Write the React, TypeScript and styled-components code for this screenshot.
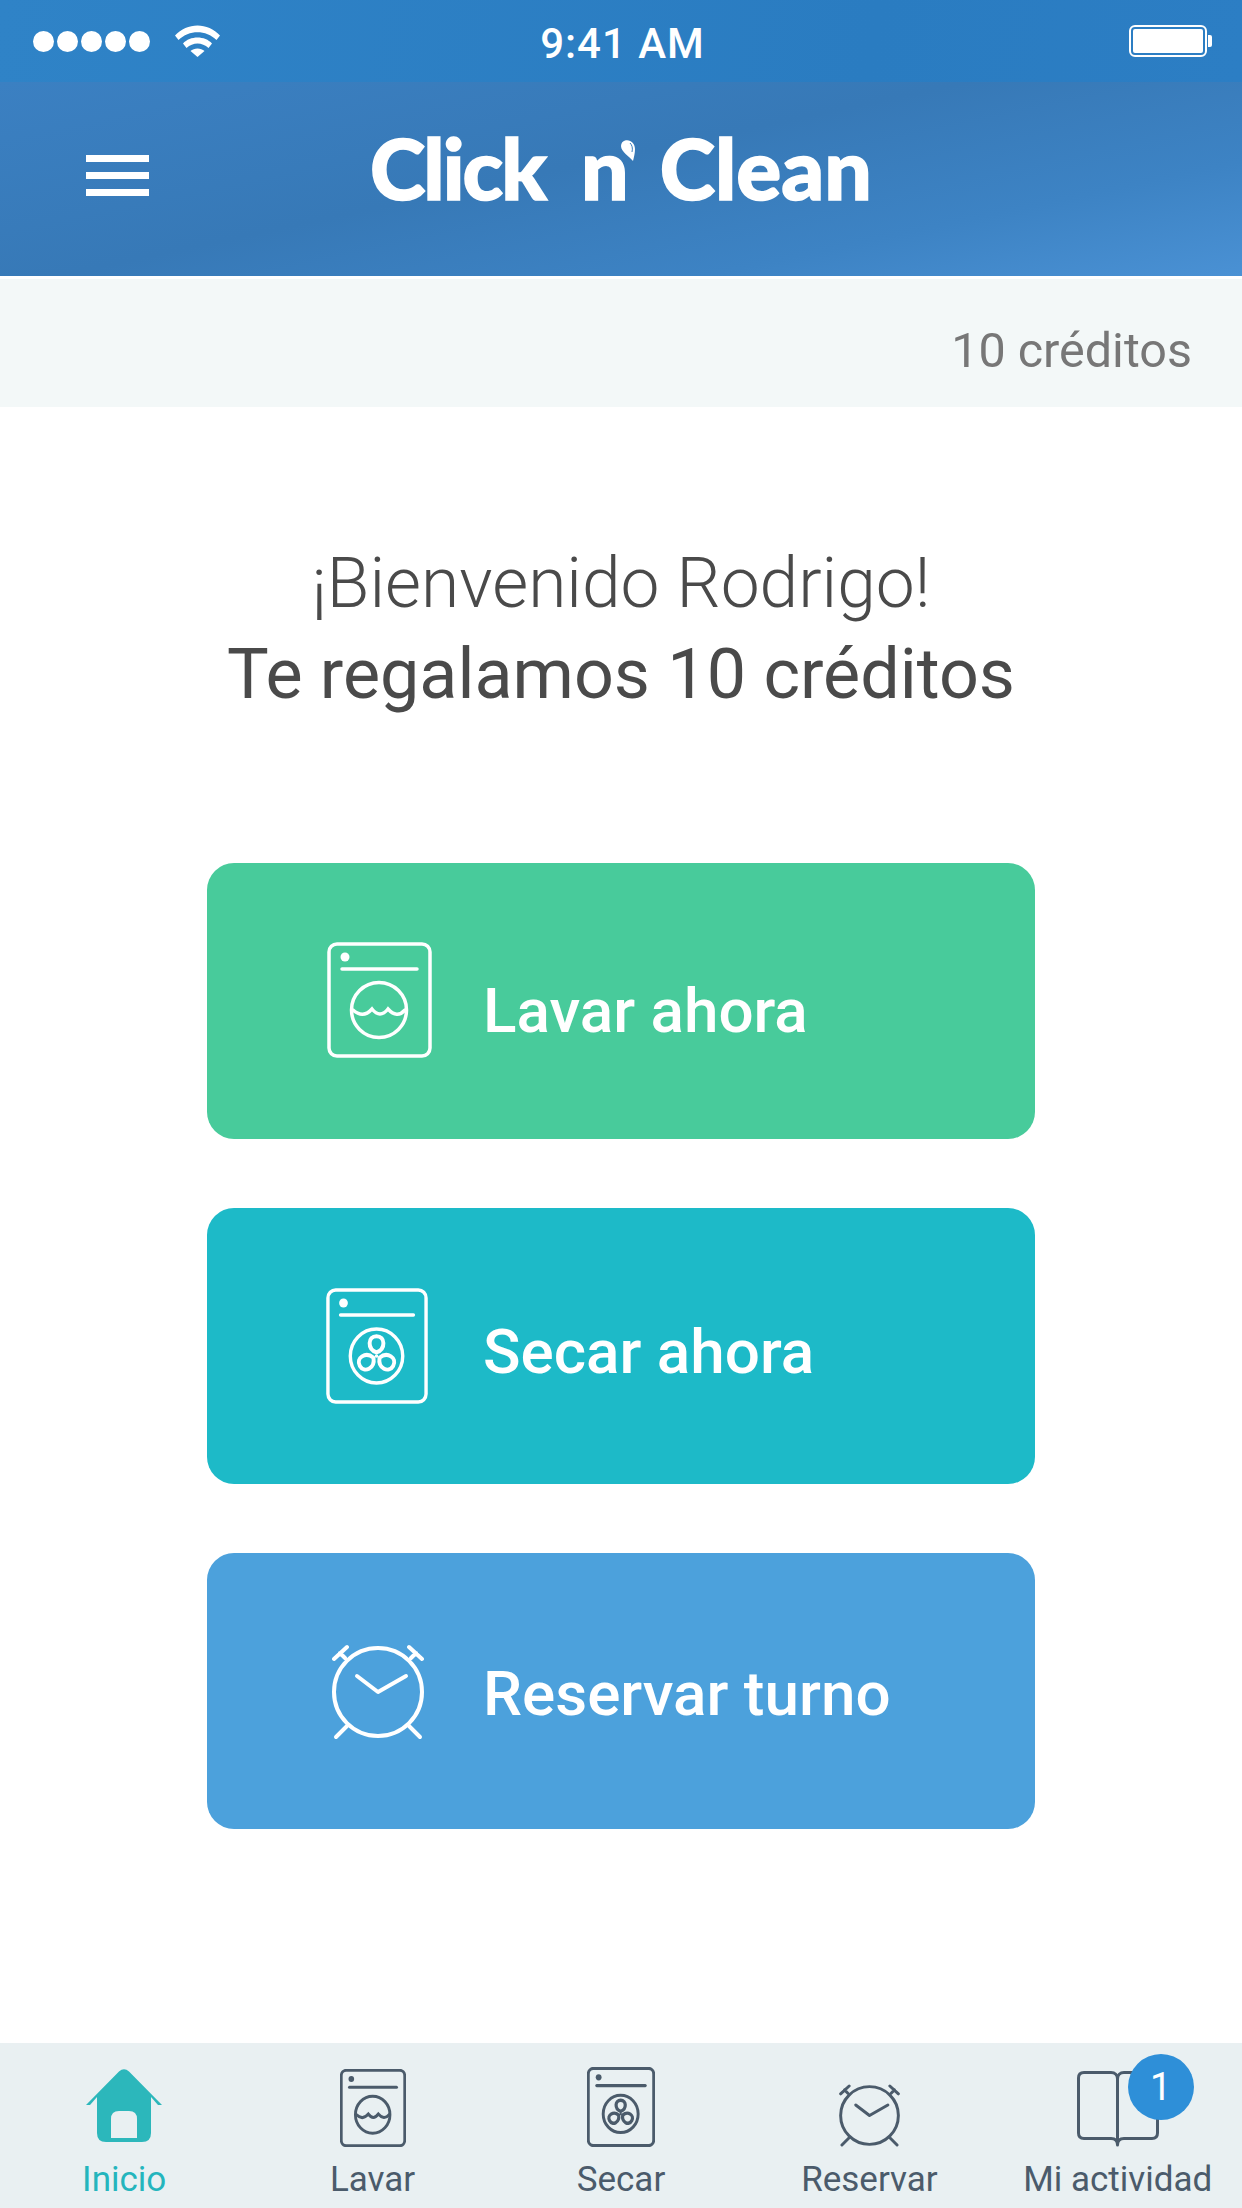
import styled, { createGlobalStyle } from "styled-components";

const GlobalStyle = createGlobalStyle`
  html, body {
    margin: 0;
    padding: 0;
    background: #fff;
    font-family: Roboto, "Liberation Sans", sans-serif;
  }
`;

type WasherProps = { drum: "water" | "fan"; strokeWidth: number; width: number; height: number };

const FAN_LOBE = "M0-4C-11-8-10-22 0-22C10-22 11-8 0-4Z";

const WasherIcon = ({ drum, strokeWidth, width, height }: WasherProps) => (
  <svg
    width={width}
    height={height}
    viewBox="0 0 105 116"
    preserveAspectRatio="none"
    fill="none"
    stroke="currentColor"
    strokeWidth={strokeWidth}
    strokeLinecap="round"
  >
    <rect x="2" y="2" width="101" height="112" rx="8" />
    <circle cx="18" cy="15" r="4.5" fill="currentColor" stroke="none" />
    <path d="M15 27H90" />
    {drum === "water" ? (
      <>
        <circle cx="52" cy="68" r="27.5" />
        <path d="M26 68Q36 77 45 67Q53 77 61 67Q70 77 78 68" />
      </>
    ) : (
      <>
        <circle cx="52" cy="68" r="27" />
        <g transform="translate(52 68) scale(.9)" strokeWidth={strokeWidth + 1}>
          <path d={FAN_LOBE} />
          <path d={FAN_LOBE} transform="rotate(120)" />
          <path d={FAN_LOBE} transform="rotate(240)" />
          <circle r="2" fill="currentColor" stroke="none" />
        </g>
      </>
    )}
  </svg>
);

const AlarmIcon = ({ strokeWidth, width, height }: { strokeWidth: number; width: number; height: number }) => (
  <svg
    width={width}
    height={height}
    viewBox="0 0 92 96"
    fill="none"
    stroke="currentColor"
    strokeWidth={strokeWidth}
    strokeLinecap="round"
    strokeLinejoin="round"
  >
    <circle cx="46" cy="48" r="44" />
    <path d="M25 32L46 48L74 32" />
    <path d="M2 15L15 3M8 9L13 14M90 15L77 3M84 9L79 14" />
    <path d="M15 82L4 93M77 82L88 93" />
  </svg>
);

// the extra height under the walls lifts the house a little above the other tab icons
const HomeIcon = () => (
  <svg width="76" height="78" viewBox="0 0 76 78">
    <path
      fill="#2cb7bb"
      d="M33 2.500Q38-2 43 2.500L76 36H72L65 28V64Q65 73 56 73H20Q11 73 11 64V28L4 36H0Z"
    />
    <path fill="#e9f0f2" d="M25 69V50Q25 42 33 42H43Q51 42 51 50V69Z" />
  </svg>
);

const BookIcon = () => (
  <svg
    width="82"
    height="76"
    viewBox="0 0 82 76"
    fill="none"
    stroke="currentColor"
    strokeWidth="3"
    strokeLinecap="round"
  >
    <path d="M40.500 74V8C40.500 4 38 1.500 34 1.500H7Q1.500 1.500 1.500 7V62Q1.500 67.500 7 67.500H34C38 67.500 40.500 69 40.500 74C40.500 69 43 67.500 47 67.500H75Q80.500 67.500 80.500 62V7Q80.500 1.500 75 1.500H47C43 1.500 40.500 4 40.500 8" />
  </svg>
);

const WifiIcon = () => (
  <svg width="45" height="32" viewBox="0 0 45 32" fill="#fff">
    <path d="M0 10.500C12-3 33-3 45 10.500L41.500 15C31 4.500 14 4.500 3.500 15Z" />
    <path d="M8 18.500C15 10.500 30 10.500 37 18.500L33.500 23C27 17 18 17 11.500 23Z" />
    <path d="M15.500 26C19 22.500 26 22.500 29.500 26L22.500 32Z" />
  </svg>
);

const Droplet = () => (
  <LogoDrop width="14" height="21" viewBox="0 0 14 21">
    <path fill="#fff" d="M4 0.500C9-1 14 3 14 9C14 13 13 17 12 21C9 17 0 12 0 6C0 3 2 1 4 0.500Z" />
    <path fill="none" stroke="#3a7dbd" strokeWidth="1" d="M9 3C11 5 12 8 11 12" />
  </LogoDrop>
);

const tabs = [
  { label: "Inicio", icon: <HomeIcon />, active: true },
  { label: "Lavar", icon: <WasherIcon drum="water" strokeWidth={4.5} width={66} height={78} /> },
  { label: "Secar", icon: <WasherIcon drum="fan" strokeWidth={4.5} width={68} height={80} /> },
  { label: "Reservar", icon: <AlarmIcon strokeWidth={4.5} width={61} height={63} /> },
  { label: "Mi actividad", icon: <BookIcon />, badge: 1 },
];

export default function App() {
  return (
    <>
      <GlobalStyle />
      <Screen>
        <StatusBar>
          <StatusLeft>
            <SignalDots>
              {[0, 1, 2, 3, 4].map((dot) => (
                <SignalDot key={dot} />
              ))}
            </SignalDots>
            <WifiIcon />
          </StatusLeft>
          <Clock>9:41 AM</Clock>
          <Battery>
            <BatteryBody>
              <BatteryLevel />
            </BatteryBody>
            <BatteryTip />
          </Battery>
        </StatusBar>

        <Header>
          <MenuButton>
            <MenuBar />
            <MenuBar />
            <MenuBar />
          </MenuButton>
          <Logo>
            <LogoWord>Click</LogoWord>
            <LogoWord>
              n
              <Droplet />
            </LogoWord>
            <LogoClean>Clean</LogoClean>
          </Logo>
        </Header>

        <CreditsBar>10 créditos</CreditsBar>

        <Main>
          <Welcome>
            <Greeting>¡Bienvenido Rodrigo!</Greeting>
            <Gift>Te regalamos 10 créditos</Gift>
          </Welcome>

          <Actions>
            <ActionButton $bg="#48cb9b">
              <ActionIcon $dx={0} $dy={-2}>
                <WasherIcon drum="water" strokeWidth={3.5} width={105} height={116} />
              </ActionIcon>
              <ActionLabel $drop={18}>Lavar ahora</ActionLabel>
            </ActionButton>
            <ActionButton $bg="#1dbac8">
              <ActionIcon $dx={-3} $dy={0}>
                <WasherIcon drum="fan" strokeWidth={3.5} width={102} height={116} />
              </ActionIcon>
              <ActionLabel $drop={11}>Secar ahora</ActionLabel>
            </ActionButton>
            <ActionButton $bg="#4ca1dc">
              <ActionIcon $dx={-2} $dy={2}>
                <AlarmIcon strokeWidth={4} width={92} height={96} />
              </ActionIcon>
              <ActionLabel $drop={4}>Reservar turno</ActionLabel>
            </ActionButton>
          </Actions>
        </Main>

        <TabBar>
          {tabs.map((tab) => (
            <Tab key={tab.label} $active={!!tab.active}>
              <TabIcon>
                {tab.icon}
                {tab.badge && <Badge>{tab.badge}</Badge>}
              </TabIcon>
              <TabLabel>{tab.label}</TabLabel>
            </Tab>
          ))}
        </TabBar>
      </Screen>
    </>
  );
}

const Screen = styled.div`
  display: flex;
  flex-direction: column;
  width: 1242px;
  height: 2208px;
  overflow: hidden;
  background: #fff;
`;

const StatusBar = styled.div`
  display: grid;
  grid-template-columns: 1fr auto 1fr;
  align-items: center;
  height: 82px;
  padding: 0 30px 0 33px;
  box-sizing: border-box;
  background: linear-gradient(100deg, #2f83c7 0%, #2a7cc1 70%, #2c7ec4 100%);
  color: #fff;
`;

const StatusLeft = styled.div`
  display: flex;
  align-items: center;
  gap: 25px;
`;

const SignalDots = styled.div`
  display: flex;
  gap: 3px;
`;

const SignalDot = styled.span`
  width: 21px;
  height: 21px;
  border-radius: 50%;
  background: #fff;
`;

const Clock = styled.div`
  padding-top: 6px;
  font-size: 42px;
  font-weight: 500;
  letter-spacing: 1px;
  line-height: 44px;
`;

const Battery = styled.div`
  display: flex;
  align-items: center;
  justify-self: end;
`;

const BatteryBody = styled.div`
  width: 78px;
  height: 32px;
  padding: 2px;
  box-sizing: border-box;
  border: 2px solid #fff;
  border-radius: 6px;
`;

const BatteryLevel = styled.div`
  height: 100%;
  background: #fff;
  border-radius: 2px;
`;

const BatteryTip = styled.div`
  width: 4px;
  height: 12px;
  margin-left: 1px;
  background: #fff;
  border-radius: 0 2px 2px 0;
`;

const Header = styled.header`
  display: grid;
  grid-template-columns: 1fr auto 1fr;
  align-items: center;
  height: 197px;
  padding: 0 86px 8px;
  box-sizing: border-box;
  background:
    linear-gradient(168deg, #3b80c2 0%, #3779b7 45%, #3d83c4 75%, #4a91d4 100%) top / 100% 194px no-repeat;
  border-bottom: 3px solid #fff;
`;

const MenuButton = styled.div`
  display: flex;
  flex-direction: column;
  gap: 10px;
  width: 63px;
`;

const MenuBar = styled.span`
  height: 7px;
  background: #fff;
`;

const Logo = styled.div`
  display: flex;
  align-items: baseline;
  gap: 36px;
  margin-bottom: 14px;
  color: #fff;
  -webkit-text-stroke: 1.5px #fff;
  font-family: Lato, "Liberation Sans", sans-serif;
  font-weight: 900;
  font-size: 84px;
  line-height: 1;
  letter-spacing: -2px;
`;

const LogoWord = styled.span`
  display: inline-flex;
  align-items: flex-start;
`;

const LogoClean = styled(LogoWord)`
  margin-left: -11px;
  letter-spacing: 0;
`;

const LogoDrop = styled.svg`
  margin: 14px 0 0 -6px;
`;

const CreditsBar = styled.div`
  height: 128px;
  padding: 15px 50px 0 0;
  box-sizing: border-box;
  background: #f3f8f8;
  color: #777;
  font-size: 48.5px;
  line-height: 113px;
  text-align: right;
`;

const Main = styled.main`
  display: flex;
  flex: 1;
  flex-direction: column;
  align-items: center;
  padding-top: 132px;
`;

const Welcome = styled.div`
  color: #4a4a4a;
  font-size: 70px;
  line-height: 90px;
  text-align: center;
`;

const Greeting = styled.div`
  font-size: 69.5px;
  font-weight: 300;
`;

const Gift = styled.div`
  font-weight: 400;
`;

const Actions = styled.div`
  display: flex;
  flex-direction: column;
  gap: 69px;
  margin-top: 144px;
`;

const ActionButton = styled.div<{ $bg: string }>`
  display: flex;
  align-items: center;
  width: 828px;
  height: 276px;
  padding-left: 120px;
  box-sizing: border-box;
  border-radius: 27px;
  background: ${(p) => p.$bg};
  color: #fff;
`;

const ActionIcon = styled.div<{ $dx: number; $dy: number }>`
  display: flex;
  justify-content: center;
  width: 105px;
  margin: ${(p) => p.$dy}px ${(p) => 51 - p.$dx}px 0 ${(p) => p.$dx}px;
`;

const ActionLabel = styled.span<{ $drop: number }>`
  padding-top: ${(p) => p.$drop}px;
  font-size: 62px;
  font-weight: 500;
`;

const TabBar = styled.nav`
  display: grid;
  grid-template-columns: repeat(5, 1fr);
  height: 165px;
  background: #e9f0f2;
`;

const Tab = styled.div<{ $active: boolean }>`
  display: flex;
  flex-direction: column;
  align-items: center;
  justify-content: flex-end;
  padding-bottom: 8px;
  color: ${(p) => (p.$active ? "#24b5bd" : "#4b5b6b")};
`;

const TabIcon = styled.div`
  position: relative;
  display: flex;
  align-items: flex-end;
  margin-bottom: 13px;
`;

const Badge = styled.span`
  position: absolute;
  top: -17px;
  right: -35px;
  width: 66px;
  height: 66px;
  border-radius: 50%;
  background: #2e8fd8;
  color: #fff;
  font-size: 38px;
  line-height: 66px;
  text-align: center;
`;

const TabLabel = styled.span`
  font-size: 35px;
  line-height: 40px;
`;
